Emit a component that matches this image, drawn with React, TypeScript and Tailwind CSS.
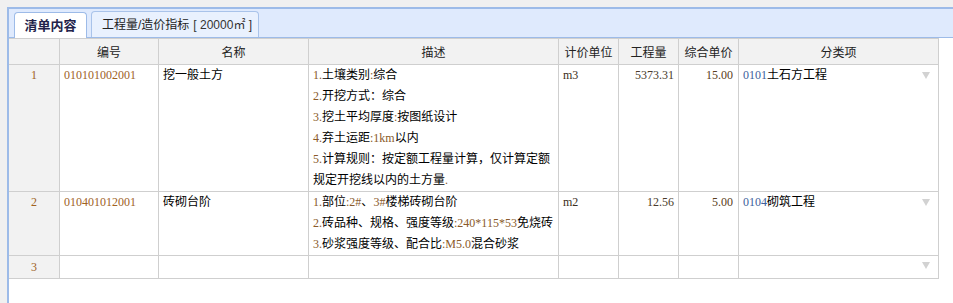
import React from 'react';

type Seg = { text: string; color?: string };

const cols = ['', '编号', '名称', '描述', '计价单位', '工程量', '综合单价', '分类项'];

const rows = [
  {
    no: '1',
    code: '010101002001',
    name: '挖一般土方',
    desc: [
      '1.土壤类别:综合',
      '2.开挖方式：综合',
      '3.挖土平均厚度:按图纸设计',
      '4.弃土运距:1km以内',
      '5.计算规则：按定额工程量计算，仅计算定额',
      '规定开挖线以内的土方量.',
    ],
    unit: 'm3',
    qty: '5373.31',
    price: '15.00',
    catCode: '0101',
    catName: '土石方工程',
    height: 'h-[127px]',
  },
  {
    no: '2',
    code: '010401012001',
    name: '砖砌台阶',
    desc: [
      '1.部位:2#、3#楼梯砖砌台阶',
      '2.砖品种、规格、强度等级:240*115*53免烧砖',
      '3.砂浆强度等级、配合比:M5.0混合砂浆',
    ],
    unit: 'm2',
    qty: '12.56',
    price: '5.00',
    catCode: '0104',
    catName: '砌筑工程',
    height: 'h-[64px]',
  },
];

// split a line into ascii / cjk runs so the latin bits get their own tint
function splitRuns(line: string): Seg[] {
  const parts = line.match(/[\x00-\x7f]+|[^\x00-\x7f]+/g) || [];
  return parts.map((p) => {
    if (!/[\x00-\x7f]/.test(p)) return { text: p };
    if (p === '1km' || p === 'M5.0') return { text: p, color: '#4b4a94' };
    return { text: p, color: '#8a5a2a' };
  });
}

const Mixed: React.FC<{ line: string }> = ({ line }) => (
  <div className="whitespace-nowrap">
    {splitRuns(line).map((s, i) => (
      <span key={i} style={s.color ? { color: s.color } : undefined}>
        {s.text}
      </span>
    ))}
  </div>
);

const Caret: React.FC<{ top: string }> = ({ top }) => (
  <span
    className={`absolute right-[8px] ${top} w-0 h-0 border-l-[4px] border-r-[4px] border-t-[7px] border-l-transparent border-r-transparent border-t-[#d2d2d2]`}
  />
);

const cell = 'border-r border-b border-[#cfcfcf]';

export default function App() {
  return (
    <div className="w-[953px] h-[303px] bg-[#f0f0f0] pt-[7px] pl-[7px] overflow-hidden font-['Liberation_Serif','Noto_Sans_CJK_SC',serif] text-[12px] text-black">
      <div className="h-full border-l-2 border-t-2 border-[#9dbbe8] bg-white">
        {/* Tabs */}
        <div className="h-[29px] bg-[#dfeafd] border-b border-[#9dbbe8] flex items-end gap-[4px] pl-[5px]">
          <div className="h-[26px] -mb-px w-[73px] bg-white border border-b-0 border-[#9dbbe8] rounded-t-[4px] flex items-center justify-center font-['Liberation_Sans','Noto_Sans_CJK_SC',sans-serif] text-[13px] font-bold text-[#22224a]">
            清单内容
          </div>
          <div className="h-[26px] w-[168px] bg-[#e9f1fe] border border-b-0 border-[#a9c3ea] rounded-t-[4px] flex items-center pl-[10px] font-['Liberation_Sans','Noto_Sans_CJK_SC',sans-serif] text-[12px] text-[#222]">
            工程量/造价指标 <span className="ml-[4px] text-[#333]">[ 20000㎡ ]</span>
          </div>
        </div>

        {/* Grid */}
        <div className="grid grid-cols-[51px_99px_150px_250px_60px_60px_60px_200px] w-[930px]">
          {cols.map((c, i) => (
            <div
              key={i}
              className={`${cell} border-t h-[27px] bg-[#f2f2f2] flex items-center justify-center font-['Noto_Sans_CJK_SC',sans-serif] text-[#222]`}
            >
              {c}
            </div>
          ))}

          {rows.map((r) => (
            <React.Fragment key={r.no}>
              <div className={`${cell} ${r.height} bg-[#f2f2f2] text-center leading-[21px] text-[#a0621f]`}>{r.no}</div>
              <div className={`${cell} pl-[4px] leading-[21px] text-[#a0621f]`}>{r.code}</div>
              <div className={`${cell} pl-[4px] leading-[21px]`}>{r.name}</div>
              <div className={`${cell} pl-[4px] leading-[21px]`}>
                {r.desc.map((d, i) => (
                  <Mixed key={i} line={d} />
                ))}
              </div>
              <div className={`${cell} pl-[4px] leading-[21px] text-[#3a2d20]`}>{r.unit}</div>
              <div className={`${cell} pr-[4px] text-right leading-[21px] text-[#4a3b2b]`}>{r.qty}</div>
              <div className={`${cell} pr-[5px] text-right leading-[21px] text-[#5a4020]`}>{r.price}</div>
              <div className={`${cell} relative pl-[4px] leading-[21px]`}>
                <span className="text-[#3d5f9c]">{r.catCode}</span>
                {r.catName}
                <Caret top="top-[7px]" />
              </div>
            </React.Fragment>
          ))}

          <div className={`${cell} h-[23px] bg-[#f2f2f2] text-center leading-[22px] text-[#a0621f]`}>3</div>
          <div className={cell} />
          <div className={cell} />
          <div className={cell} />
          <div className={cell} />
          <div className={cell} />
          <div className={cell} />
          <div className={`${cell} relative`}>
            <Caret top="top-[6px]" />
          </div>
        </div>
      </div>
    </div>
  );
}
